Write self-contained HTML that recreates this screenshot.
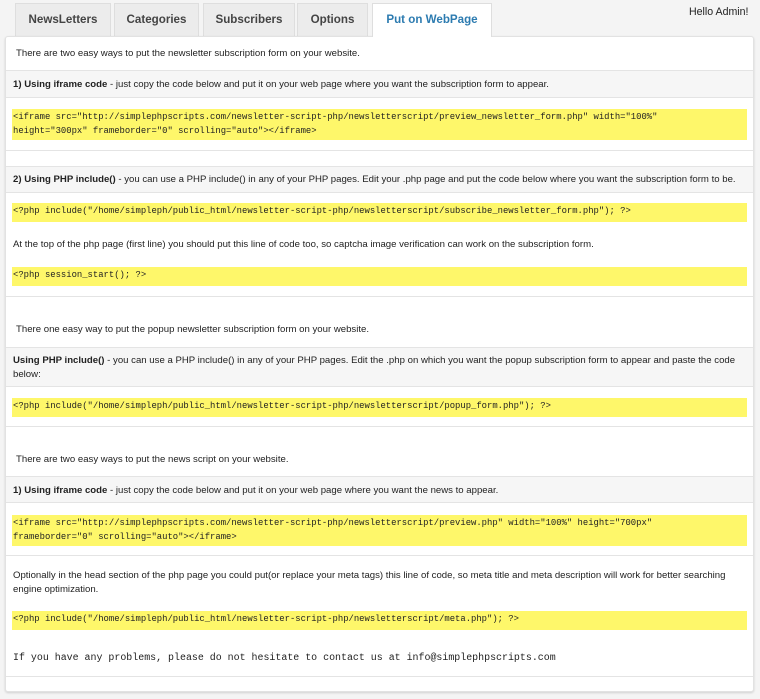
<!DOCTYPE html>
<html><head><meta charset="utf-8"><style>
*{margin:0;padding:0;box-sizing:border-box}
body{width:760px;height:699px;background:#f4f4f4;font-family:"Liberation Sans",sans-serif;font-size:9.6px;color:#222;position:relative;overflow:hidden}
.tab{position:absolute;top:3px;height:33px;background:#ececec;border:1px solid #dedede;border-bottom:none;font-weight:bold;font-size:11.6px;color:#444;text-align:center;line-height:32px}
.tab.act{background:#fff;color:#2c7bb0;height:34px;z-index:2}
.panel{position:absolute;left:5px;top:36px;width:749px;height:656px;background:#fff;border:1px solid #e2e2e2;border-radius:3px;box-shadow:0 1px 2px rgba(0,0,0,.15)}
.a{position:absolute;left:0;width:747px}
.g{background:#f6f6f6}
.bt{border-top:1px solid #e4e4e4}
.t{position:absolute;left:7px;line-height:14px;white-space:nowrap}
.y{position:absolute;left:6px;width:735px;background:#fef76a;font-family:"Liberation Mono",monospace;font-size:8.9px;line-height:14px;padding:1px 1px;white-space:pre;color:#222}
.m{position:absolute;left:7px;font-family:"Liberation Mono",monospace;font-size:9.95px;line-height:14px;white-space:pre}
b{font-weight:bold}
</style></head><body>
<div class="tab" style="left:15px;width:96px">NewsLetters</div>
<div class="tab" style="left:114px;width:85px">Categories</div>
<div class="tab" style="left:203px;width:92px">Subscribers</div>
<div class="tab" style="left:297px;width:71px">Options</div>
<div class="tab act" style="left:372px;width:120px">Put on WebPage</div>
<div style="position:absolute;left:689px;top:6px;font-size:10.6px">Hello Admin!</div>
<div class="panel">
<div class="t" style="top:10px;left:10px">There are two easy ways to put the newsletter subscription form on your website.</div>
<div class="a g bt" style="top:33px;height:27px"></div>
<div class="t" style="top:41px"><b>1) Using iframe code</b> - just copy the code below and put it on your web page where you want the subscription form to appear.</div>
<div class="a bt" style="top:60px;height:0"></div>
<div class="y" style="top:72px;height:31px">&lt;iframe src="http://simplephpscripts.com/newsletter-script-php/newsletterscript/preview_newsletter_form.php" width="100%"
height="300px" frameborder="0" scrolling="auto"&gt;&lt;/iframe&gt;</div>
<div class="a bt" style="top:113px;height:0"></div>
<div class="a g bt" style="top:129px;height:27px;border-bottom:1px solid #e4e4e4"></div>
<div class="t" style="top:136px"><b>2) Using PHP include()</b> - you can use a PHP include() in any of your PHP pages. Edit your .php page and put the code below where you want the subscription form to be.</div>
<div class="y" style="top:166px;height:19px">&lt;?php include("/home/simpleph/public_html/newsletter-script-php/newsletterscript/subscribe_newsletter_form.php"); ?&gt;</div>
<div class="t" style="top:201px">At the top of the php page (first line) you should put this line of code too, so captcha image verification can work on the subscription form.</div>
<div class="y" style="top:230px;height:19px">&lt;?php session_start(); ?&gt;</div>
<div class="a bt" style="top:259px;height:0"></div>
<div class="t" style="top:286px;left:10px">There one easy way to put the popup newsletter subscription form on your website.</div>
<div class="a g bt" style="top:310px;height:40px;border-bottom:1px solid #e4e4e4"></div>
<div class="t" style="top:317px;white-space:normal;width:735px"><b>Using PHP include()</b> - you can use a PHP include() in any of your PHP pages. Edit the .php on which you want the popup subscription form to appear and paste the code below:</div>
<div class="y" style="top:361px;height:19px">&lt;?php include("/home/simpleph/public_html/newsletter-script-php/newsletterscript/popup_form.php"); ?&gt;</div>
<div class="a bt" style="top:389px;height:0"></div>
<div class="t" style="top:416px;left:10px">There are two easy ways to put the news script on your website.</div>
<div class="a g bt" style="top:439px;height:27px;border-bottom:1px solid #e4e4e4"></div>
<div class="t" style="top:447px"><b>1) Using iframe code</b> - just copy the code below and put it on your web page where you want the news to appear.</div>
<div class="y" style="top:478px;height:31px">&lt;iframe src="http://simplephpscripts.com/newsletter-script-php/newsletterscript/preview.php" width="100%" height="700px"
frameborder="0" scrolling="auto"&gt;&lt;/iframe&gt;</div>
<div class="a bt" style="top:518px;height:0"></div>
<div class="t" style="top:532px;white-space:normal;width:735px">Optionally in the head section of the php page you could put(or replace your meta tags) this line of code, so meta title and meta description will work for better searching engine optimization.</div>
<div class="y" style="top:574px;height:19px">&lt;?php include("/home/simpleph/public_html/newsletter-script-php/newsletterscript/meta.php"); ?&gt;</div>
<div class="m" style="top:614px">If you have any problems, please do not hesitate to contact us at info@simplephpscripts.com</div>
<div class="a bt" style="top:639px;height:0"></div>
</div>
</body></html>
